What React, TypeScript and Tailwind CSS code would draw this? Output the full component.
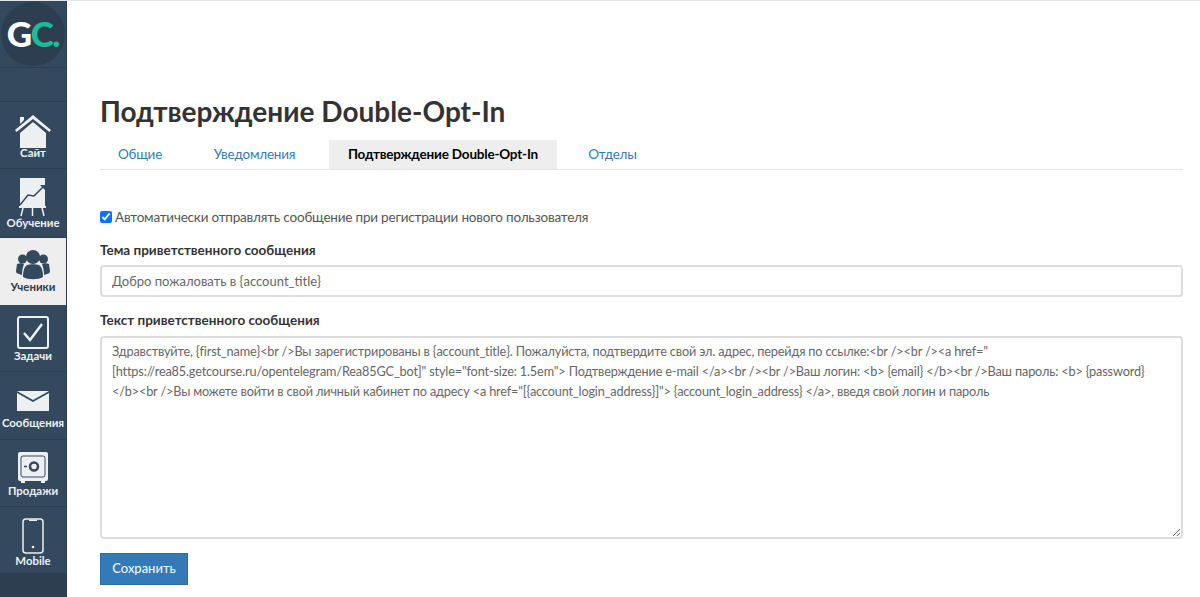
import React from "react";

const ICON = "#ecf0f1";
const DARK = "#34495e";

function NavItem({ label, active, icon, h = "h-[67px]", iconCls, labelCls }: { label: string; active?: boolean; icon: React.ReactNode; h?: string; iconCls: string; labelCls: string }) {
  return (
    <div className={`${h} flex flex-col items-center border-b ${active ? "bg-[#eeeeee] border-[#eeeeee] text-[#2c3e50]" : "border-[#2c3e50] text-[#ecf0f1]"}`}>
      <div className={`flex justify-center ${iconCls}`}>{icon}</div>
      <div className={`text-[11.4px] leading-[14px] font-bold whitespace-nowrap ${labelCls}`}>{label}</div>
    </div>
  );
}

const Home = () => (
  <svg width="36" height="34" viewBox="0 0 36 34" fill={ICON} className="block">
    <path d="M5 2h4v3L5 9z" />
    <path d="M0 15 18 0l18 15-1.500 2L18 4 1.500 17z" />
    <path d="M5 18 18 7l13 11v15H5z" />
  </svg>
);
const Chart = () => (
  <svg width="28" height="41" viewBox="0 0 28 41" fill="none" className="block">
    <rect x="1" y="0" width="25" height="28" fill={ICON} />
    <path d="M1 27 L9 17 L15 18 L25 8" stroke={DARK} strokeWidth="1.500" />
    <path d="M21 7h5v5z" fill={DARK} />
    <path d="M0 29h27" stroke={ICON} strokeWidth="2" />
    <path d="M4 30 2 38M13.500 30v8M23 30l2 8" stroke={ICON} strokeWidth="1.500" />
  </svg>
);
const Users = () => (
  <svg width="34" height="30" viewBox="0 0 34 30" fill={DARK} className="block">
    <circle cx="17" cy="7" r="7" />
    <circle cx="6.500" cy="9" r="4.500" />
    <circle cx="27.500" cy="9" r="4.500" />
    <path d="M1 14c2-1 5-1 7 0-1 3-2 6-2 11l-3-1c-2-1-3-1-3-3z" />
    <path d="M33 14c-2-1-5-1-7 0 1 3 2 6 2 11l3-1c2-1 3-1 3-3z" />
    <path d="M11 15c3-1 9-1 12 0 3 2 4 7 4 12-5 3-15 3-20 0 0-5 1-10 4-12z" />
  </svg>
);
const Tasks = () => (
  <svg width="32" height="33" viewBox="0 0 32 33" fill="none" className="block">
    <rect x="1" y="1" width="30" height="31" rx="2" stroke={ICON} strokeWidth="2" />
    <path d="M7 17l6 7L25 8" stroke={ICON} strokeWidth="2.500" />
  </svg>
);
const Mail = () => (
  <svg width="32" height="20" viewBox="0 0 32 20" fill={ICON} className="block">
    <path d="M0 0h32L16 9z" />
    <path d="M0 2 16 11 32 2v18H0z" />
  </svg>
);
const Safe = () => (
  <svg width="32" height="33" viewBox="0 0 32 33" fill="none" className="block">
    <rect x="1" y="1" width="30" height="29" rx="2" fill={ICON} />
    <rect x="4" y="5" width="24" height="21" rx="2" stroke={DARK} strokeWidth="1" />
    <circle cx="17" cy="15.500" r="4" stroke={DARK} strokeWidth="2.500" />
    <path d="M7 15.500h3" stroke={DARK} strokeWidth="1.500" />
    <path d="M4 31h4M24 31h4" stroke={ICON} strokeWidth="2" />
  </svg>
);
const Phone = () => (
  <svg width="22" height="36" viewBox="0 0 22 36" fill="none" className="block">
    <rect x="1" y="1" width="20" height="34" rx="3" stroke={ICON} strokeWidth="1.500" />
    <path d="M7 1.500h8v1.500H7z" fill={ICON} />
    <circle cx="11" cy="29" r="1.300" fill={ICON} />
  </svg>
);

const body = `Здравствуйте, {first_name}<br />Вы зарегистрированы в {account_title}. Пожалуйста, подтвердите свой эл. адрес, перейдя по ссылке:<br /><br /><a href="
[https://rea85.getcourse.ru/opentelegram/Rea85GC_bot]" style="font-size: 1.5em"> Подтверждение e-mail </a><br /><br />Ваш логин: <b> {email} </b><br />Ваш пароль: <b> {password}
</b><br />Вы можете войти в свой личный кабинет по адресу <a href="[{account_login_address}]"> {account_login_address} </a>, введя свой логин и пароль`;

const Tab = ({ children, active, cls }: { children: React.ReactNode; active?: boolean; cls: string }) => (
  <div className={`h-[29px] flex items-center justify-center text-[13.5px] tracking-[-0.2px] ${cls} ${active ? "bg-[#eeeeee] text-black font-bold" : "text-[#337ab7]"}`}>{children}</div>
);

export default function App() {
  return (
    <div className="flex h-[597px] w-[1200px] overflow-hidden bg-white text-[#333333] border-t border-[#e5e5e5]" style={{ fontFamily: 'Lato, "Open Sans", sans-serif' }}>
      <aside className="w-[67px] shrink-0 bg-[#34495e] border-r border-[#2c3e50] flex flex-col mt-[-1px]">
        <div className="h-[68px] border-b border-[#2c3e50] flex items-center justify-center">
          <div className="w-[64px] h-[64px] rounded-full bg-[#2c3e50] flex items-center justify-center text-[35px] font-black tracking-[-1.5px] leading-none">
            <span className="text-white">G</span><span className="text-[#1abc9c]">C.</span>
          </div>
        </div>
        <div className="h-[34px] border-b border-[#2c3e50]" />
        <NavItem label="Сайт" icon={<Home />} iconCls="mt-[13px]" labelCls="mt-[-3px]" />
        <NavItem label="Обучение" icon={<Chart />} h="h-[69px]" iconCls="mt-[9px]" labelCls="mt-[-3px]" />
        <NavItem label="Ученики" active icon={<Users />} iconCls="mt-[12px]" labelCls="mt-0" />
        <NavItem label="Задачи" icon={<Tasks />} iconCls="mt-[11px]" labelCls="mt-0" />
        <NavItem label="Сообщения" icon={<Mail />} h="h-[68px]" iconCls="mt-[19px]" labelCls="mt-[5px]" />
        <NavItem label="Продажи" icon={<Safe />} iconCls="mt-[11px]" labelCls="mt-0" />
        <NavItem label="Mobile" icon={<Phone />} iconCls="mt-[11px]" labelCls="mt-0" />
        <div className="flex-1 bg-[#2c3e50]" />
      </aside>
      <main className="flex-1 pl-[33px] pr-[17px] pt-[92px]">
        <h1 className="text-[28px] leading-[36px] font-bold text-[#333333] m-0">Подтверждение Double-Opt-In</h1>
        <div className="flex border-b border-[#e5e5e5] mt-[11px]">
          <Tab cls="w-[80px]">Общие</Tab>
          <Tab cls="w-[149px]">Уведомления</Tab>
          <Tab active cls="w-[228px]">Подтверждение Double-Opt-In</Tab>
          <Tab cls="w-[111px]">Отделы</Tab>
        </div>
        <label className="flex items-center mt-[38px] h-[18px] text-[13.5px] tracking-[-0.2px] text-[#555555]">
          <input type="checkbox" defaultChecked className="w-[12px] h-[12px] m-0 mr-[3px] accent-[#0075ff]" />
          Автоматически отправлять сообщение при регистрации нового пользователя
        </label>
        <div className="mt-[15px] text-[13.5px] leading-[18px] font-bold text-[#333333]">Тема приветственного сообщения</div>
        <input
          readOnly
          value="Добро пожаловать в {account_title}"
          className="block w-full h-[32px] mt-[6px] px-[10px] text-[13px] text-[#666666] bg-white border-2 border-[#dddddd] rounded-[4px] outline-none"
        />
        <div className="mt-[14px] text-[13.5px] leading-[18px] font-bold text-[#333333]">Текст приветственного сообщения</div>
        <textarea
          readOnly
          defaultValue={body}
          wrap="off"
          className="block w-full h-[203px] mt-[7px] px-[10px] py-[3px] text-[12.7px] tracking-[-0.15px] leading-[20px] text-[#666666] bg-white border-2 border-[#dddddd] rounded-[4px] outline-none resize-y overflow-hidden"
        />
        <button className="block mt-[14px] w-[88px] h-[32px] bg-[#337ab7] border border-[#2e6da4] text-white text-[13px]">Сохранить</button>
      </main>
    </div>
  );
}
